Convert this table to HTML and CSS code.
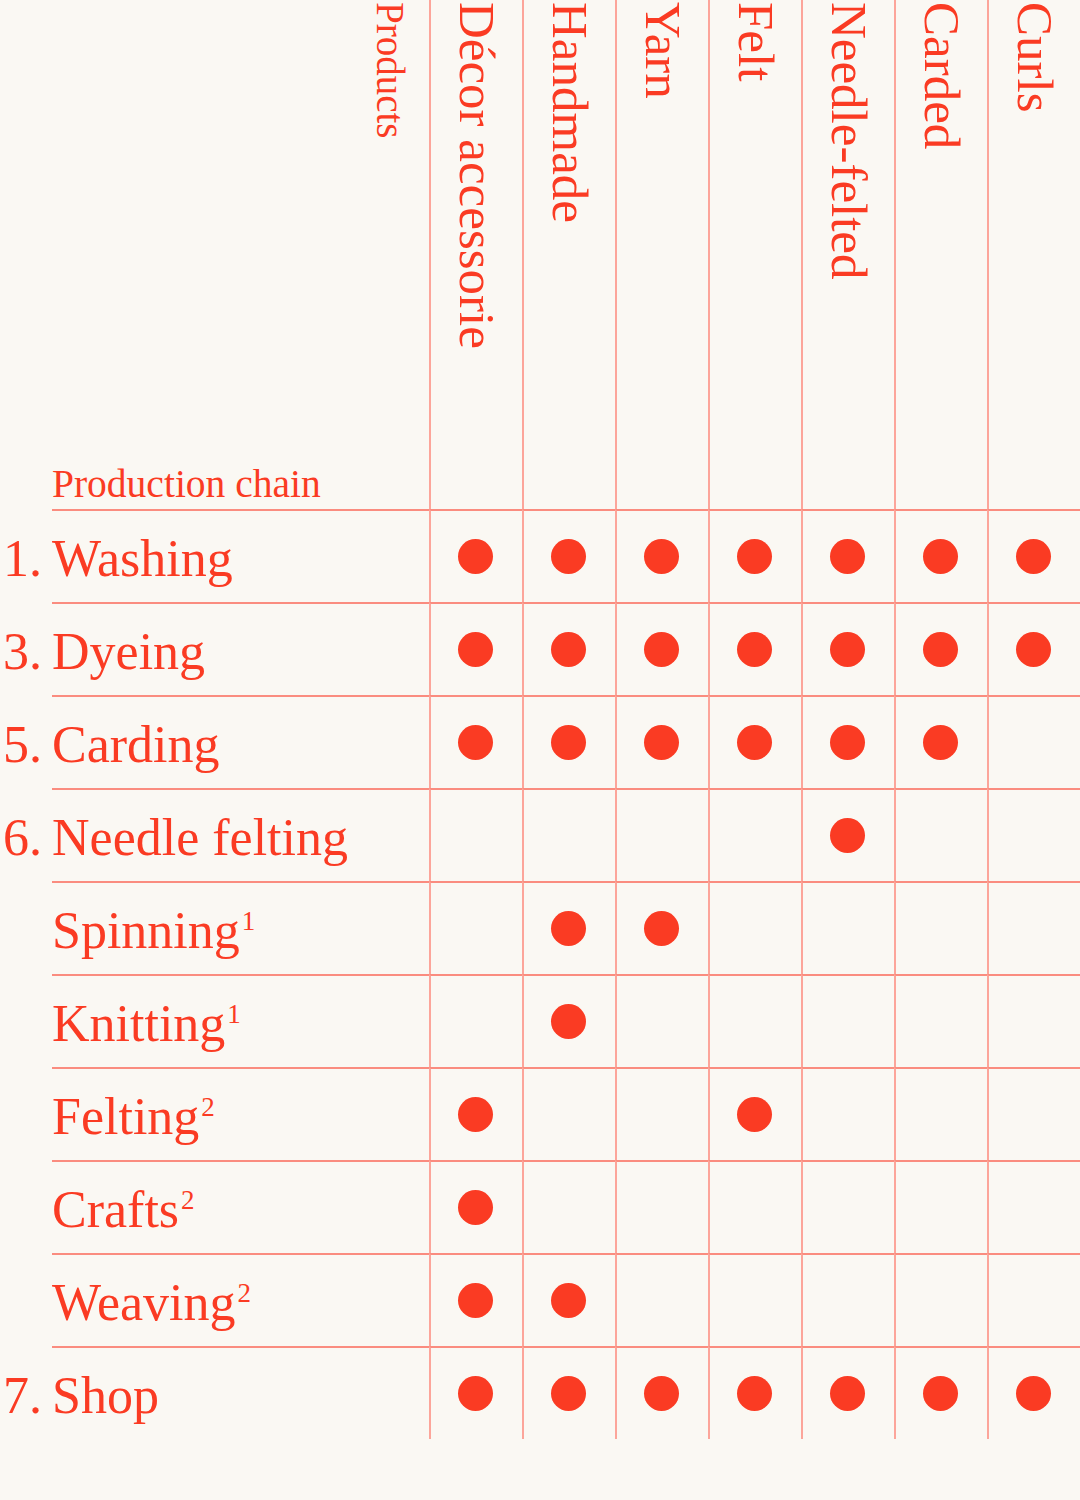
FILE: index.html
```html
<!DOCTYPE html>
<html lang="en">
<head>
<meta charset="utf-8">
<title>Production chain</title>
<link rel="stylesheet" href="styles.css">
</head>
<body>
<div class="chart">
  <div class="head">
    <div class="head-label">
      <span class="chain">Production chain</span>
      <span class="products">Products</span>
    </div>
    <div class="col"><span class="vlabel">Décor accessorie</span></div>
    <div class="col"><span class="vlabel">Handmade</span></div>
    <div class="col"><span class="vlabel">Yarn</span></div>
    <div class="col"><span class="vlabel">Felt</span></div>
    <div class="col"><span class="vlabel">Needle-felted</span></div>
    <div class="col"><span class="vlabel">Carded</span></div>
    <div class="col"><span class="vlabel">Curls</span></div>
  </div>

  <div class="row">
    <div class="num">1.</div><div class="label">Washing</div>
    <div class="cell"><span class="dot"></span></div><div class="cell"><span class="dot"></span></div><div class="cell"><span class="dot"></span></div><div class="cell"><span class="dot"></span></div><div class="cell"><span class="dot"></span></div><div class="cell"><span class="dot"></span></div><div class="cell"><span class="dot"></span></div>
  </div>
  <div class="row">
    <div class="num">3.</div><div class="label">Dyeing</div>
    <div class="cell"><span class="dot"></span></div><div class="cell"><span class="dot"></span></div><div class="cell"><span class="dot"></span></div><div class="cell"><span class="dot"></span></div><div class="cell"><span class="dot"></span></div><div class="cell"><span class="dot"></span></div><div class="cell"><span class="dot"></span></div>
  </div>
  <div class="row">
    <div class="num">5.</div><div class="label">Carding</div>
    <div class="cell"><span class="dot"></span></div><div class="cell"><span class="dot"></span></div><div class="cell"><span class="dot"></span></div><div class="cell"><span class="dot"></span></div><div class="cell"><span class="dot"></span></div><div class="cell"><span class="dot"></span></div><div class="cell"></div>
  </div>
  <div class="row">
    <div class="num">6.</div><div class="label">Needle felting</div>
    <div class="cell"></div><div class="cell"></div><div class="cell"></div><div class="cell"></div><div class="cell"><span class="dot"></span></div><div class="cell"></div><div class="cell"></div>
  </div>
  <div class="row">
    <div class="num"></div><div class="label">Spinning<span class="fn">1</span></div>
    <div class="cell"></div><div class="cell"><span class="dot"></span></div><div class="cell"><span class="dot"></span></div><div class="cell"></div><div class="cell"></div><div class="cell"></div><div class="cell"></div>
  </div>
  <div class="row">
    <div class="num"></div><div class="label">Knitting<span class="fn">1</span></div>
    <div class="cell"></div><div class="cell"><span class="dot"></span></div><div class="cell"></div><div class="cell"></div><div class="cell"></div><div class="cell"></div><div class="cell"></div>
  </div>
  <div class="row">
    <div class="num"></div><div class="label">Felting<span class="fn">2</span></div>
    <div class="cell"><span class="dot"></span></div><div class="cell"></div><div class="cell"></div><div class="cell"><span class="dot"></span></div><div class="cell"></div><div class="cell"></div><div class="cell"></div>
  </div>
  <div class="row">
    <div class="num"></div><div class="label">Crafts<span class="fn">2</span></div>
    <div class="cell"><span class="dot"></span></div><div class="cell"></div><div class="cell"></div><div class="cell"></div><div class="cell"></div><div class="cell"></div><div class="cell"></div>
  </div>
  <div class="row">
    <div class="num"></div><div class="label">Weaving<span class="fn">2</span></div>
    <div class="cell"><span class="dot"></span></div><div class="cell"><span class="dot"></span></div><div class="cell"></div><div class="cell"></div><div class="cell"></div><div class="cell"></div><div class="cell"></div>
  </div>
  <div class="row">
    <div class="num">7.</div><div class="label">Shop</div>
    <div class="cell"><span class="dot"></span></div><div class="cell"><span class="dot"></span></div><div class="cell"><span class="dot"></span></div><div class="cell"><span class="dot"></span></div><div class="cell"><span class="dot"></span></div><div class="cell"><span class="dot"></span></div><div class="cell"><span class="dot"></span></div>
  </div>
</div>
</body>
</html>
```

FILE: styles.css
```css
html, body {
  margin: 0;
  padding: 0;
  background: #faf8f3;
}
body {
  width: 1080px;
  min-height: 1500px;
  font-family: "Liberation Serif", "Times New Roman", serif;
  color: #fa3b23;
}
.chart {
  width: 1080px;
}
.head,
.row {
  display: grid;
  grid-template-columns: 52px 377px repeat(7, 93px);
}
.head {
  height: 509px;
}
.row {
  height: 93px;
}
.head-label {
  grid-column: 1 / 3;
  display: flex;
  justify-content: space-between;
  padding-left: 52px;
  padding-right: 16px;
}
.chain {
  align-self: flex-end;
  font-size: 39.5px;
  line-height: normal;
  padding-bottom: 2px;
  white-space: nowrap;
}
.products {
  align-self: flex-start;
  writing-mode: vertical-rl;
  font-size: 39px;
  line-height: normal;
  padding-top: 2px;
}
.col {
  box-sizing: border-box;
  border-left: 2px solid #fca59a;
  display: flex;
  align-items: flex-start;
  padding-left: 17px;
  padding-top: 2px;
}
.vlabel {
  writing-mode: vertical-rl;
  font-size: 51px;
  line-height: normal;
  white-space: nowrap;
}
.num,
.label {
  box-sizing: border-box;
  font-size: 52px;
  line-height: normal;
  padding-top: 18px;
  white-space: nowrap;
}
.num {
  border-top: 2px solid transparent;
  padding-left: 3px;
}
.label {
  border-top: 2px solid #fa8c7f;
}
.fn {
  font-size: 27px;
  vertical-align: 18px;
  margin-left: 2px;
}
.cell {
  box-sizing: border-box;
  border-top: 2px solid #fa8c7f;
  border-left: 2px solid #fca59a;
  padding-right: 3px;
  display: flex;
  align-items: center;
  justify-content: center;
}
.dot {
  width: 35px;
  height: 35px;
  border-radius: 50%;
  background: #fa3b23;
}
```
